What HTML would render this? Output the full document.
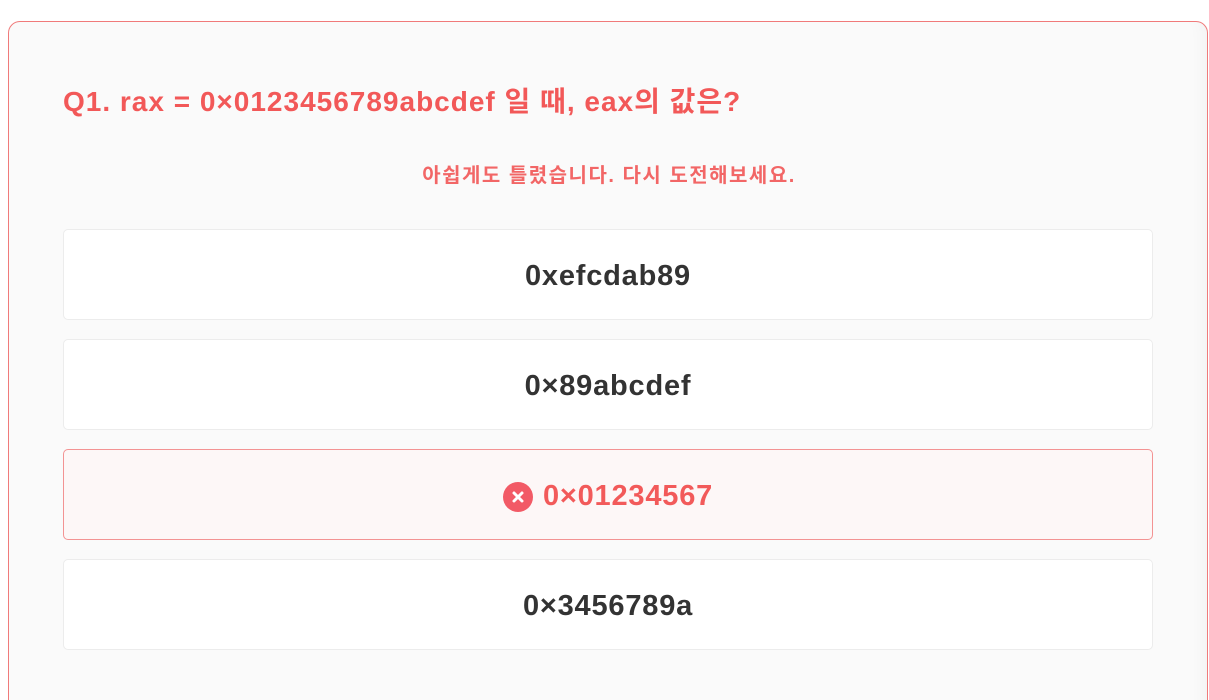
<!DOCTYPE html>
<html><head><meta charset="utf-8"><style>
html,body{margin:0;padding:0;background:#fff;width:1209px;height:700px;overflow:hidden;position:relative;font-family:"Liberation Sans","Noto Sans CJK KR",sans-serif;}
.card{position:absolute;left:8px;top:21px;width:1198px;height:700px;border:1px solid #f07a7a;border-radius:12px;background:#fafafa;box-shadow:inset -20px 0 18px -18px rgba(0,0,0,0.04);}
.t{position:absolute;left:54px;top:58px;font-size:28px;font-weight:bold;color:#f25858;letter-spacing:1px;}
.s{position:absolute;left:0;width:1200px;top:137px;text-align:center;font-size:20px;font-weight:bold;color:#f26666;letter-spacing:1.5px;}
.o{position:absolute;left:54px;width:1088px;height:89px;box-sizing:content-box;border:1px solid #ececec;border-radius:5px;background:#fff;display:flex;align-items:center;justify-content:center;font-size:29px;font-weight:bold;color:#333;letter-spacing:0.8px;padding-top:0;}
.o span.tx{position:relative;top:2px;}
.o.w{background:#fdf7f7;border-color:#f39393;color:#f25a5a;}
.ic{width:30px;height:30px;border-radius:50%;background:#f25a66;display:inline-flex;align-items:center;justify-content:center;margin-right:10px;position:relative;top:2px;}
</style></head><body>
<div class="card">
<div class="t">Q1. rax = 0×0123456789abcdef 일 때, eax의 값은?</div>
<div class="s">아쉽게도 틀렸습니다. 다시 도전해보세요.</div>
<div class="o" style="top:207px"><span class="tx">0xefcdab89</span></div>
<div class="o" style="top:317px"><span class="tx">0×89abcdef</span></div>
<div class="o w" style="top:427px"><span class="ic"><svg width="14" height="14" viewBox="0 0 14 14"><path d="M3 3L11 11M11 3L3 11" stroke="#fff" stroke-width="3" stroke-linecap="round"/></svg></span><span class="tx">0×01234567</span></div>
<div class="o" style="top:537px"><span class="tx">0×3456789a</span></div>
</div>
</body></html>
